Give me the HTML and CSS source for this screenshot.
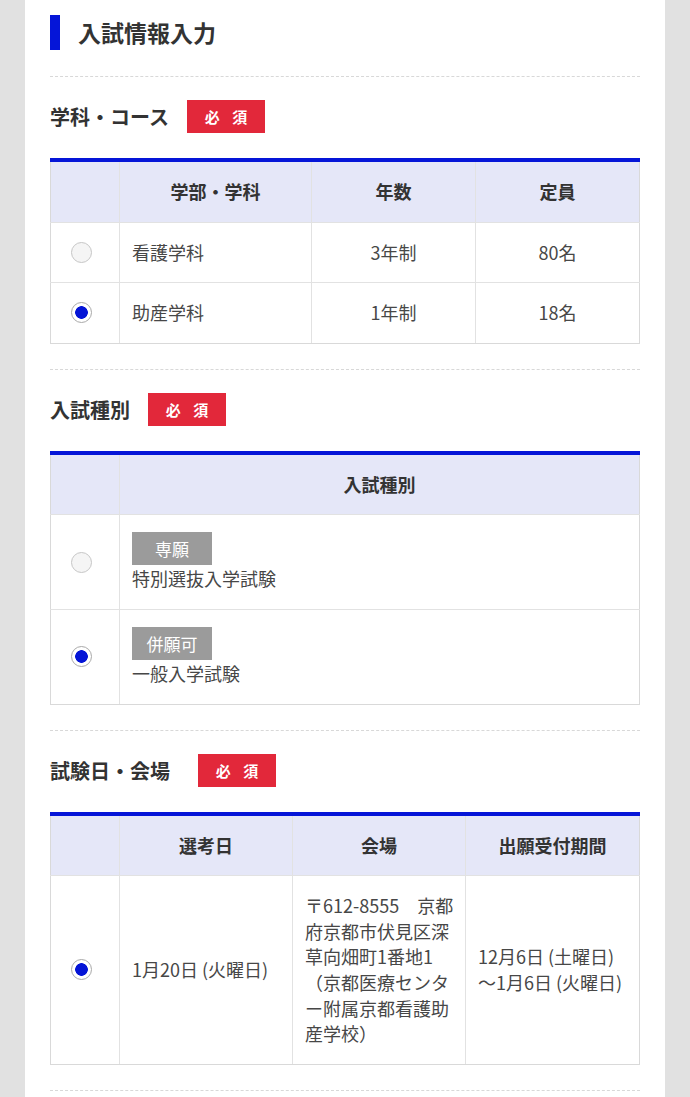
FILE: index.html
```html
<!DOCTYPE html>
<html lang="ja">
<head>
<meta charset="utf-8">
<title>入試情報入力</title>
<link rel="stylesheet" href="styles.css">
</head>
<body>
<main class="page">
  <h1 class="title"><span class="title-bar"></span>入試情報入力</h1>
  <hr class="divider">

  <div class="section-head">
    <h2 class="section-title">学科・コース</h2>
    <span class="required">必 須</span>
  </div>
  <table class="grid">
    <colgroup><col class="c-radio"><col style="width:192px"><col style="width:164px"><col></colgroup>
    <thead>
      <tr><th></th><th>学部・学科</th><th>年数</th><th>定員</th></tr>
    </thead>
    <tbody>
      <tr><td class="cell-radio"><span class="radio"></span></td><td>看護学科</td><td class="center">3年制</td><td class="center">80名</td></tr>
      <tr><td class="cell-radio"><span class="radio on"></span></td><td>助産学科</td><td class="center">1年制</td><td class="center">18名</td></tr>
    </tbody>
  </table>
  <hr class="divider">

  <div class="section-head">
    <h2 class="section-title">入試種別</h2>
    <span class="required">必 須</span>
  </div>
  <table class="grid">
    <colgroup><col class="c-radio"><col></colgroup>
    <thead>
      <tr><th></th><th>入試種別</th></tr>
    </thead>
    <tbody>
      <tr><td class="cell-radio"><span class="radio"></span></td><td><span class="tag">専願</span>特別選抜入学試験</td></tr>
      <tr><td class="cell-radio"><span class="radio on"></span></td><td><span class="tag">併願可</span>一般入学試験</td></tr>
    </tbody>
  </table>
  <hr class="divider">

  <div class="section-head">
    <h2 class="section-title">試験日・会場</h2>
    <span class="required wide-gap">必 須</span>
  </div>
  <table class="grid">
    <colgroup><col class="c-radio"><col style="width:173px"><col style="width:173px"><col></colgroup>
    <thead>
      <tr><th></th><th>選考日</th><th>会場</th><th>出願受付期間</th></tr>
    </thead>
    <tbody>
      <tr>
        <td class="cell-radio"><span class="radio on"></span></td>
        <td>1月20日 (火曜日)</td>
        <td class="nowrap">〒612-8555　京都<br>府京都市伏見区深<br>草向畑町1番地1<br>（京都医療センタ<br>ー附属京都看護助<br>産学校）</td>
        <td class="nowrap">12月6日 (土曜日)<br>〜1月6日 (火曜日)</td>
      </tr>
    </tbody>
  </table>
  <hr class="divider">
</main>
</body>
</html>
```

FILE: styles.css
```css
html, body {
  margin: 0;
  padding: 0;
}

body {
  background: #e1e1e1;
  font-family: "Noto Sans CJK JP", "Noto Sans", sans-serif;
  color: #444;
}

.page {
  width: 590px;
  margin-left: 25px;
  padding: 15px 25px 10px;
  background: #fff;
  min-height: 1072px;
}

.title {
  display: flex;
  align-items: center;
  gap: 18px;
  height: 35px;
  margin: 0;
  font-size: 23px;
  font-weight: 700;
  color: #333;
  line-height: 35px;
}

.title-bar {
  width: 10px;
  height: 35px;
  background: #0515d8;
}

.divider {
  border: 0;
  border-top: 1px dashed #d8d8d8;
  margin: 25px 0 0;
  height: 0;
}

.title + .divider {
  margin-top: 26px;
}

.section-head {
  display: flex;
  align-items: center;
  gap: 18px;
  margin-top: 23px;
  height: 33px;
}

.section-title {
  margin: 0;
  font-size: 20px;
  font-weight: 700;
  color: #333;
  line-height: 33px;
}

.required {
  display: inline-block;
  width: 78px;
  height: 33px;
  line-height: 33px;
  background: #e2283a;
  color: #fff;
  font-size: 15px;
  font-weight: 700;
  text-align: center;
  letter-spacing: 0.3em;
  padding-left: 0.3em;
  box-sizing: border-box;
}

.required.wide-gap {
  margin-left: 10px;
}

.grid {
  width: 590px;
  margin-top: 25px;
  border-collapse: collapse;
  table-layout: fixed;
  border-top: 4px solid #0515d8;
  font-size: 18px;
  line-height: 25.6px;
}

.grid .c-radio {
  width: 69px;
}

.grid th,
.grid td {
  border: 1px solid #e2e2e2;
  padding: 17px 12px;
  vertical-align: middle;
  text-align: left;
}

.grid tr > :first-child {
  border-left-color: #d9d9d9;
}

.grid tr > :last-child {
  border-right-color: #d9d9d9;
}

.grid tbody tr:last-child td {
  border-bottom-color: #d9d9d9;
}

.grid th {
  background: #e5e7f8;
  color: #333;
  font-weight: 700;
  text-align: center;
  border-top: 0;
}

.grid td {
  color: #474747;
}

.grid td.center {
  text-align: center;
}

.grid td.cell-radio {
  text-align: left;
  padding: 0 0 0 20px;
}

.grid td.nowrap {
  white-space: nowrap;
}

.radio {
  display: block;
  width: 21px;
  height: 21px;
  border-radius: 50%;
  border: 1px solid #c6c6c6;
  background: #f5f5f5;
  box-sizing: border-box;
}

.radio.on {
  border-color: #a9a9a9;
  background: radial-gradient(circle, #0414d6 0 6px, #fff 6.6px);
}

.tag {
  display: block;
  width: 80px;
  height: 33px;
  line-height: 33px;
  margin-bottom: 1px;
  background: #9b9b9b;
  color: #fff;
  font-size: 17px;
  text-align: center;
}
```
